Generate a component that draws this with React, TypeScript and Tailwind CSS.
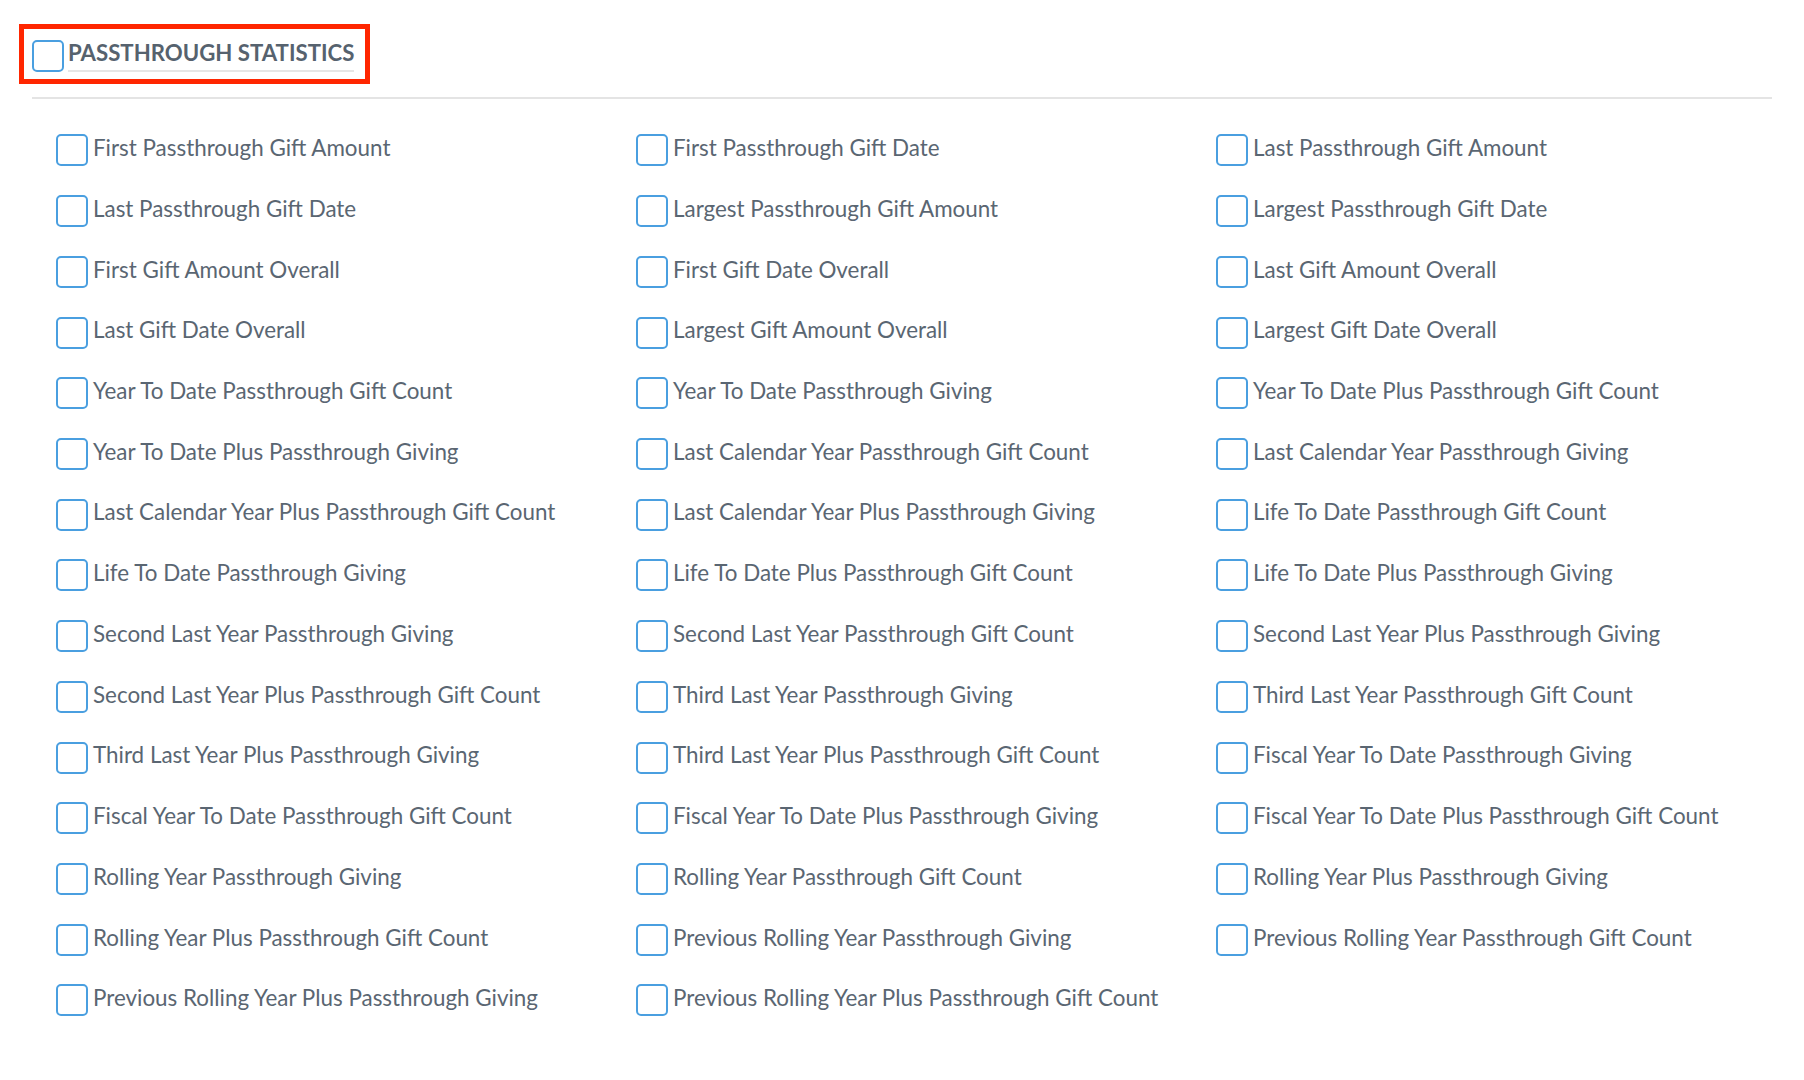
import React from "react";

const fields: string[] = [
  "First Passthrough Gift Amount",
  "First Passthrough Gift Date",
  "Last Passthrough Gift Amount",
  "Last Passthrough Gift Date",
  "Largest Passthrough Gift Amount",
  "Largest Passthrough Gift Date",
  "First Gift Amount Overall",
  "First Gift Date Overall",
  "Last Gift Amount Overall",
  "Last Gift Date Overall",
  "Largest Gift Amount Overall",
  "Largest Gift Date Overall",
  "Year To Date Passthrough Gift Count",
  "Year To Date Passthrough Giving",
  "Year To Date Plus Passthrough Gift Count",
  "Year To Date Plus Passthrough Giving",
  "Last Calendar Year Passthrough Gift Count",
  "Last Calendar Year Passthrough Giving",
  "Last Calendar Year Plus Passthrough Gift Count",
  "Last Calendar Year Plus Passthrough Giving",
  "Life To Date Passthrough Gift Count",
  "Life To Date Passthrough Giving",
  "Life To Date Plus Passthrough Gift Count",
  "Life To Date Plus Passthrough Giving",
  "Second Last Year Passthrough Giving",
  "Second Last Year Passthrough Gift Count",
  "Second Last Year Plus Passthrough Giving",
  "Second Last Year Plus Passthrough Gift Count",
  "Third Last Year Passthrough Giving",
  "Third Last Year Passthrough Gift Count",
  "Third Last Year Plus Passthrough Giving",
  "Third Last Year Plus Passthrough Gift Count",
  "Fiscal Year To Date Passthrough Giving",
  "Fiscal Year To Date Passthrough Gift Count",
  "Fiscal Year To Date Plus Passthrough Giving",
  "Fiscal Year To Date Plus Passthrough Gift Count",
  "Rolling Year Passthrough Giving",
  "Rolling Year Passthrough Gift Count",
  "Rolling Year Plus Passthrough Giving",
  "Rolling Year Plus Passthrough Gift Count",
  "Previous Rolling Year Passthrough Giving",
  "Previous Rolling Year Passthrough Gift Count",
  "Previous Rolling Year Plus Passthrough Giving",
  "Previous Rolling Year Plus Passthrough Gift Count",
];

const Box: React.FC = () => (
  <div className="w-[32px] h-[32px] shrink-0 rounded-[5px] border-2 border-[#4a9fe0] bg-white" />
);

export default function App() {
  return (
    <div className="min-h-screen bg-white font-['Lato','Liberation_Sans',sans-serif] text-[#5a6672]">
      {/* section header */}
      <div className="pl-[19px] pt-[24px]">
        <div className="inline-flex items-center border-[5px] border-[#ff2600] pl-[8px] pt-[11px] pb-[7px] pr-[11px]">
          <Box />
          <div className="ml-[4px] h-[32px] flex items-center border-b-2 border-[#e6e6e6] pb-[4px] text-[22.2px] font-bold text-[#56626e] leading-none">
            PASSTHROUGH STATISTICS
          </div>
        </div>
      </div>

      <div className="ml-[32px] mr-[32px] mt-[13px] h-[2px] bg-[#e4e4e4]" />

      {/* field list */}
      <div className="grid grid-cols-[580px_580px_580px] pl-[56px] pt-[21px]">
        {fields.map((f) => (
          <label key={f} className="flex h-[60.72px] items-center cursor-pointer">
            <Box />
            <span className="ml-[5px] text-[22.4px] leading-none pb-[4px] whitespace-nowrap">{f}</span>
          </label>
        ))}
      </div>
    </div>
  );
}
